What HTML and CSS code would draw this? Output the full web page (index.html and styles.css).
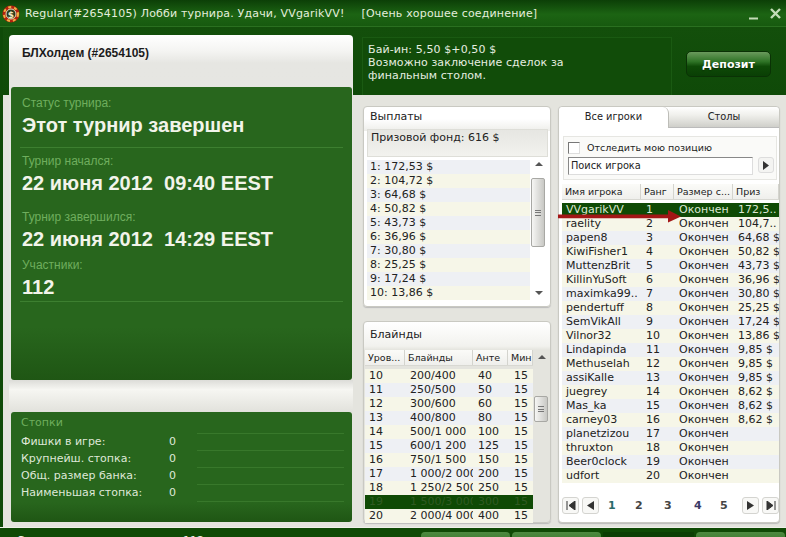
FILE: index.html
```html
<!DOCTYPE html>
<html lang="ru">
<head>
<meta charset="utf-8">
<title>Лобби турнира</title>
<link rel="stylesheet" href="styles.css">
</head>
<body>
<div class="window">
  <header class="titlebar">
    <svg class="logo" width="18" height="18" viewBox="0 0 18 18"><circle cx="9" cy="9" r="8.5" fill="#b3200f"/><circle cx="9" cy="9" r="7" fill="none" stroke="#f0b040" stroke-width="2" stroke-dasharray="3 3"/><circle cx="9" cy="9" r="5" fill="#2a3a20" stroke="#e8e0c0"/><text x="9" y="12.5" text-anchor="middle" class="logo-text">$</text></svg>
    <span class="title-text">Regular(#2654105) Лобби турнира. Удачи, VVgarikVV!</span>
    <span class="title-conn">[Очень хорошее соединение]</span>
    <svg class="winctl" width="36" height="14" viewBox="0 0 36 14"><path d="M0 11.5H9" stroke="#c4dcb8" stroke-width="2"/><path d="M22 2L31 11M31 2L22 11" stroke="#c4dcb8" stroke-width="2.4"/></svg>
  </header>

  <div class="main">
    <section class="left">
      <h1 class="left-title">БЛХолдем (#2654105)</h1>
      <div class="green status">
        <div class="stat-label">Статус турнира:</div>
        <div class="stat-value stat-value--rule">Этот турнир завершен</div>
        <div class="stat-label stat-label--after-rule">Турнир начался:</div>
        <div class="stat-value">22 июня 2012&nbsp; 09:40 EEST</div>
        <div class="stat-label stat-label--wide">Турнир завершился:</div>
        <div class="stat-value">22 июня 2012&nbsp; 14:29 EEST</div>
        <div class="stat-label stat-label--narrow">Участники:</div>
        <div class="stat-value stat-value--last">112</div>
      </div>
      <div class="left-gap"></div>
      <div class="green stacks">
        <div class="stacks-title">Стопки</div>
        <div class="stack-row"><span class="stack-name">Фишки в игре:</span><span class="stack-val">0</span><span class="stack-rule"></span></div>
        <div class="stack-row"><span class="stack-name">Крупнейш. стопка:</span><span class="stack-val">0</span><span class="stack-rule"></span></div>
        <div class="stack-row"><span class="stack-name">Общ. размер банка:</span><span class="stack-val">0</span><span class="stack-rule"></span></div>
        <div class="stack-row"><span class="stack-name">Наименьшая стопка:</span><span class="stack-val">0</span><span class="stack-rule"></span></div>
      </div>
    </section>

    <section class="right">
      <div class="infobar">
        <div class="infobox">Бай-ин: 5,50 $+0,50 $<br>Возможно заключение сделок за<br>финальным столом.</div>
        <button class="deposit">Депозит</button>
      </div>
      <div class="content">
        <div class="col-mid">
          <div class="card card--payouts">
            <div class="card-title">Выплаты</div>
            <div class="prize">Призовой фонд: 616 $</div>
            <div class="list-wrap">
              <div class="list payouts">
                <div class="row">1: 172,53 $</div>
                <div class="row">2: 104,72 $</div>
                <div class="row">3: 64,68 $</div>
                <div class="row">4: 50,82 $</div>
                <div class="row">5: 43,73 $</div>
                <div class="row">6: 36,96 $</div>
                <div class="row">7: 30,80 $</div>
                <div class="row">8: 25,25 $</div>
                <div class="row">9: 17,24 $</div>
                <div class="row">10: 13,86 $</div>
              </div>
              <div class="scrollbar">
                <span class="sb-up"></span>
                <span class="sb-thumb sb-thumb--long"><i></i></span>
                <span class="sb-down"></span>
              </div>
            </div>
          </div>
          <div class="card card--blinds">
            <div class="card-title card-title--blinds">Блайнды</div>
            <div class="blinds-wrap">
              <div class="blinds">
                <div class="thead blinds-grid"><span>Уров...</span><span>Блайнды</span><span>Анте</span><span>Мин</span></div>
                <div class="tbody">
                  <div class="row blinds-grid"><span>10</span><span>200/400</span><span>40</span><span>15</span></div>
                  <div class="row blinds-grid"><span>11</span><span>250/500</span><span>50</span><span>15</span></div>
                  <div class="row blinds-grid"><span>12</span><span>300/600</span><span>60</span><span>15</span></div>
                  <div class="row blinds-grid"><span>13</span><span>400/800</span><span>80</span><span>15</span></div>
                  <div class="row blinds-grid"><span>14</span><span>500/1 000</span><span>100</span><span>15</span></div>
                  <div class="row blinds-grid"><span>15</span><span>600/1 200</span><span>125</span><span>15</span></div>
                  <div class="row blinds-grid"><span>16</span><span>750/1 500</span><span>150</span><span>15</span></div>
                  <div class="row blinds-grid"><span>17</span><span>1 000/2 000</span><span>200</span><span>15</span></div>
                  <div class="row blinds-grid"><span>18</span><span>1 250/2 500</span><span>250</span><span>15</span></div>
                  <div class="row blinds-grid row--current"><span>19</span><span>1 500/3 000</span><span>300</span><span>15</span></div>
                  <div class="row blinds-grid"><span>20</span><span>2 000/4 000</span><span>400</span><span>15</span></div>
                </div>
              </div>
              <div class="scrollbar scrollbar--blinds">
                <span class="sb-up"></span>
                <span class="sb-thumb sb-thumb--short"><i></i></span>
              </div>
            </div>
          </div>
        </div>

        <div class="card card--players">
          <div class="tabs">
            <div class="tab tab--active">Все игроки</div>
            <div class="tab">Столы</div>
          </div>
          <div class="tracker">
            <label class="track"><span class="checkbox"></span>Отследить мою позицию</label>
            <div class="search-line">
              <div class="search">Поиск игрока</div>
              <button class="search-btn"><svg width="8" height="9" viewBox="0 0 8 9"><path d="M1 0L7 4.5L1 9Z" fill="#333"/></svg></button>
            </div>
          </div>
          <div class="thead players-grid"><span>Имя игрока</span><span>Ранг</span><span>Размер с...</span><span>Приз</span></div>
          <div class="tbody players">
            <div class="row players-grid row--me"><span>VVgarikVV</span><span>1</span><span>Окончен</span><span>172,5..</span></div>
            <div class="row players-grid"><span>raelity</span><span>2</span><span>Окончен</span><span>104,7..</span></div>
            <div class="row players-grid"><span>papen8</span><span>3</span><span>Окончен</span><span>64,68 $</span></div>
            <div class="row players-grid"><span>KiwiFisher1</span><span>4</span><span>Окончен</span><span>50,82 $</span></div>
            <div class="row players-grid"><span>MuttenzBrit</span><span>5</span><span>Окончен</span><span>43,73 $</span></div>
            <div class="row players-grid"><span>KillinYuSoft</span><span>6</span><span>Окончен</span><span>36,96 $</span></div>
            <div class="row players-grid"><span>maximka99..</span><span>7</span><span>Окончен</span><span>30,80 $</span></div>
            <div class="row players-grid"><span>pendertuff</span><span>8</span><span>Окончен</span><span>25,25 $</span></div>
            <div class="row players-grid"><span>SemVikAll</span><span>9</span><span>Окончен</span><span>17,24 $</span></div>
            <div class="row players-grid"><span>Vilnor32</span><span>10</span><span>Окончен</span><span>13,86 $</span></div>
            <div class="row players-grid"><span>Lindapinda</span><span>11</span><span>Окончен</span><span>9,85 $</span></div>
            <div class="row players-grid"><span>Methuselah</span><span>12</span><span>Окончен</span><span>9,85 $</span></div>
            <div class="row players-grid"><span>assiKalle</span><span>13</span><span>Окончен</span><span>9,85 $</span></div>
            <div class="row players-grid"><span>juegrey</span><span>14</span><span>Окончен</span><span>8,62 $</span></div>
            <div class="row players-grid"><span>Mas_ka</span><span>15</span><span>Окончен</span><span>8,62 $</span></div>
            <div class="row players-grid"><span>carney03</span><span>16</span><span>Окончен</span><span>8,62 $</span></div>
            <div class="row players-grid"><span>planetzizou</span><span>17</span><span>Окончен</span><span></span></div>
            <div class="row players-grid"><span>thruxton</span><span>18</span><span>Окончен</span><span></span></div>
            <div class="row players-grid"><span>Beer0clock</span><span>19</span><span>Окончен</span><span></span></div>
            <div class="row players-grid"><span>udfort</span><span>20</span><span>Окончен</span><span></span></div>
          </div>
          <div class="pager">
            <button class="pg-btn"><svg width="10" height="9" viewBox="0 0 10 9"><path d="M1 0V9M9 0L3 4.5L9 9Z" stroke="#333" fill="#333"/></svg></button>
            <button class="pg-btn"><svg width="9" height="9" viewBox="0 0 9 9"><path d="M8 0L1 4.5L8 9Z" fill="#333"/></svg></button>
            <div class="pg-nums"><span class="pg-1">1</span><span class="pg-2">2</span><span class="pg-2">3</span><span class="pg-4">4</span><span class="pg-2">5</span></div>
            <button class="pg-btn"><svg width="9" height="9" viewBox="0 0 9 9"><path d="M1 0L8 4.5L1 9Z" fill="#333"/></svg></button>
            <button class="pg-btn"><svg width="10" height="9" viewBox="0 0 10 9"><path d="M9 0V9M1 0L7 4.5L1 9Z" stroke="#333" fill="#333"/></svg></button>
          </div>
          <svg class="red-arrow" width="124" height="13" viewBox="0 0 124 13"><path d="M0 4.6H110V0L123 6.5L110 12.5V8.2H0Z" fill="#a31616"/></svg>
        </div>
      </div>
    </section>
  </div>

  <footer class="footer">
    <span class="foot-text">Зарегистрировано игроков: 112</span>
    <div class="foot-btns">
      <span class="foot-btn">Регистрация</span>
      <span class="foot-btn">Выплаты</span>
      <span class="foot-dark">Автовход</span>
      <span class="foot-btn">Открыть</span>
    </div>
  </footer>
</div>
</body>
</html>
```
FILE: styles.css
```css
* { box-sizing: border-box; }
html, body { margin: 0; padding: 0; }
body {
  width: 786px;
  height: 537px;
  overflow: hidden;
  background: #0f4a08;
  font-family: "DejaVu Sans", Verdana, sans-serif;
  font-size: 11px;
  color: #222;
}
.window { width: 786px; height: 537px; display: flex; flex-direction: column; overflow: hidden; }

/* title bar */
.titlebar {
  height: 27px;
  flex: none;
  display: flex;
  align-items: center;
  padding: 0 1px 0 2px;
  background: linear-gradient(#0c3f07, #1c6413 55%, #175a0f);
  border-bottom: 1px solid #2a7020;
  color: #e4eedc;
  font-size: 11px;
  letter-spacing: .18px;
}
.logo { flex: none; margin-top: 2px; }
.logo-text { font: bold 9px "DejaVu Sans", sans-serif; fill: #f0e8c0; }
.title-text { margin-left: 5px; white-space: nowrap; }
.title-conn { margin-left: 17px; white-space: nowrap; }
.winctl { margin-left: auto; flex: none; margin-top: 1px; }

/* main */
.main {
  flex: none;
  height: 500px;
  display: flex;
  border-left: 3px solid #0f4a08;
  background: linear-gradient(#134f0b 0, #0f4a08 68px, #e4e4de 68px);
}
.left {
  flex: none;
  width: 344px;
  margin: 8px 0 0 6px;
  padding: 0 1px 0 2px;
  border-radius: 4px 4px 0 0;
  background: linear-gradient(#fff, #f4f4f2 16px, #e6e6e2 28px, #e4e4de);
}
.left-title {
  height: 52px;
  margin: 0;
  padding: 11px 0 0 11px;
  font: bold 12px/14px "Liberation Sans", Arial, sans-serif;
  color: #1c1c1c;
}
.green {
  border-radius: 3px;
  background: linear-gradient(#28661d, #28661d 82%, #1f5614);
}
.status { height: 293px; padding: 9px 9px 0 11px; }
.stat-label {
  font: 12px/14px "Liberation Sans", Arial, sans-serif;
  color: #6fae5e;
}
.stat-label--after-rule { margin-top: 6px; }
.stat-label--wide { margin-top: 15px; }
.stat-label--narrow { margin-top: 7px; }
.stat-value {
  margin-top: 3px;
  font: bold 20px/24px "Liberation Sans", Arial, sans-serif;
  color: #f2f4ea;
  white-space: pre;
}
.stat-value--rule { margin: 3px 0 0 -2px; padding: 0 0 10px 2px; border-bottom: 1px solid #3d7f30; }
.stat-value--last { margin: 3px 0 0 -2px; padding: 0 0 2px 2px; border-bottom: 1px solid #3d7f30; }
.left-gap {
  height: 32px;
  background: linear-gradient(#dcdcd8, #f6f6f2 30%, #e2e2dc);
  margin: 0 -1px 0 -2px;
}
.stacks { height: 110px; padding: 4px 8px 0 10px; color: #dfe8d8; }
.stacks-title { height: 17px; font-size: 11px; line-height: 14px; color: #6fae5e; }
.stack-row {
  height: 17px;
  display: flex;
  align-items: center;
  line-height: 17px;
}
.stack-name { width: 148px; flex: none; white-space: nowrap; }
.stack-val { width: 28px; flex: none; }
.stack-rule { flex: 1; align-self: stretch; border-bottom: 1px solid #38782b; border-top: 1px solid #38782b; margin-bottom: -1px; }

/* right */
.right { flex: 1; min-width: 0; display: flex; flex-direction: column; }
.infobar { height: 68px; flex: none; padding: 10px 0 0 9px; display: flex; align-items: flex-start; }
.infobox {
  width: 310px;
  height: 58px;
  padding: 5px 0 0 5px;
  border: 1px solid #1a5a12;
  border-bottom: 0;
  line-height: 13px;
  letter-spacing: .1px;
  color: #e6eee0;
  background: #114c09;
}
.deposit {
  width: 85px;
  height: 26px;
  margin: 14px 0 0 14px;
  padding: 0;
  border: 1px solid #0a3205;
  border-radius: 5px;
  background: linear-gradient(#6a9a5c, #2f7426 40%, #0e4a07 60%, #0a3f05);
  color: #fff;
  font: bold 11px "DejaVu Sans", sans-serif;
  text-shadow: 0 1px 1px #0a3005;
}
.content {
  flex: 1;
  display: flex;
  gap: 7px;
  padding: 11px 0 4px 10px;
  min-height: 0;
}
.col-mid { width: 188px; flex: none; display: flex; flex-direction: column; gap: 14px; }
.card {
  background: #fff;
  border: 1px solid #c9c9c2;
  border-radius: 4px;
  box-shadow: 0 1px 1px #bbb;
}
.card--payouts { height: 201px; padding: 0 2px 0 3px; background: linear-gradient(#fff, #fff 12px, #eeeeea 24px, #fff 24px); }
.card--blinds { height: 202px; background: linear-gradient(#fff, #f2f2ee 24px, #e4e4de 28px); }
.card-title { height: 22px; padding: 3px 0 0 3px; line-height: 14px; }
.card-title--blinds { height: 28px; padding: 6px 0 0 6px; }
.prize {
  height: 28px;
  padding: 1px 0 0 3px;
  line-height: 14px;
  border: 1px solid #deded8;
  background: linear-gradient(#e6e6e2, #f2f2ee);
}
.list-wrap { display: flex; margin-top: 3px; }
.list { width: 163px; flex: none; }
.row { height: 14px; line-height: 14px; white-space: nowrap; color: #222; }
.payouts .row { padding-left: 3px; }
.payouts .row:nth-child(odd) { background: #eef0f4; }
.payouts .row:nth-child(even) { background: #f6f6e8; }

/* scrollbars */
.scrollbar { width: 17px; height: 140px; position: relative; margin-left: 0; }
.sb-up, .sb-down { position: absolute; left: 5px; width: 0; height: 0; border: 4px solid transparent; }
.sb-up { top: 2px; border-bottom: 4px solid #555; border-top: 0; }
.sb-down { bottom: 5px; border-top: 4px solid #555; border-bottom: 0; }
.sb-thumb {
  position: absolute;
  left: 1px;
  width: 14px;
  border: 1px solid #a8a8a4;
  border-radius: 2px;
  background: linear-gradient(90deg, #f6f6f4, #c8c8c4);
  display: flex;
  align-items: center;
  justify-content: center;
}
.sb-thumb i { display: block; width: 6px; height: 6px; border-top: 1px solid #777; border-bottom: 1px solid #777; background: linear-gradient(#777, #777) center / 100% 1px no-repeat; }
.sb-thumb--long { top: 18px; height: 69px; }
.sb-thumb--short { top: 46px; height: 26px; }

/* blinds */
.blinds-wrap { display: flex; }
.blinds { width: 168px; flex: none; margin-left: 1px; }
.thead {
  height: 16px;
  background: linear-gradient(#fbfbf8, #efefec);
  font-size: 9.5px;
  line-height: 15px;
  border-bottom: 1px solid #d8d8d2;
}
.thead span { padding-left: 3px; border-right: 1px solid #d4d4ce; overflow: hidden; white-space: nowrap; }
.blinds-grid { display: grid; grid-template-columns: 40px 68px 35px 25px; }
.blinds .tbody { margin-top: 3px; }
.blinds .row span { overflow: hidden; white-space: nowrap; }
.blinds .row span:nth-child(1) { padding-left: 4px; }
.blinds .row span:nth-child(2) { padding-left: 5px; }
.blinds .row span:nth-child(3) { padding-left: 5px; }
.blinds .row span:nth-child(4) { padding-left: 6px; }
.blinds .row:nth-child(odd) { background: #f6f6e8; }
.blinds .row:nth-child(even) { background: #eef0f4; }
.blinds .row--current:nth-child(even) { background: #0f4a05; color: #2f5a22; }
.scrollbar--blinds { height: 170px; }
.scrollbar--blinds .sb-up { top: 5px; }

/* players */
.card--players { width: 222px; flex: none; height: 417px; position: relative; padding: 0 1px; }
.tabs { display: flex; height: 21px; margin: 0 -1px; }
.tab {
  flex: 1;
  text-align: center;
  line-height: 20px;
  font-size: 9.8px;
  background: linear-gradient(#fff, #f0f0ec 40%, #cfcfca);
  border-bottom: 1px solid #bbb;
  border-radius: 0 4px 0 0;
}
.tab--active {
  flex: none;
  width: 110px;
  background: #fff;
  border-bottom: 0;
  border-right: 1px solid #bdbdb8;
  border-radius: 4px 6px 0 0;
}
.tracker {
  height: 44px;
  margin: 8px 1px 0 3px;
  padding: 5px 0 0 4px;
  border: 1px solid #e6e6e2;
  background: #fafaf8;
}
.track { display: flex; align-items: center; height: 12px; line-height: 12px; font-size: 9.5px; }
.checkbox { width: 12px; height: 12px; margin-right: 7px; border: 1px solid #777; border-right-color: #ddd; border-bottom-color: #ddd; background: #fff; }
.search-line { display: flex; margin-top: 3px; }
.search {
  width: 185px;
  height: 18px;
  padding-left: 2px;
  line-height: 16px;
  font-size: 9.8px;
  border: 1px solid #888;
  border-right-color: #ddd;
  border-bottom-color: #ddd;
  background: #fff;
}
.search-btn {
  width: 16px;
  height: 16px;
  margin-left: 5px;
  padding: 0;
  border: 1px solid #ddd;
  border-radius: 3px;
  background: #f4f4f2;
  display: flex;
  align-items: center;
  justify-content: center;
}
.players-grid { display: grid; grid-template-columns: 79px 33px 59px 46px; }
.card--players .thead { margin: 4px 0 0 2px; width: 217px; }
.players { margin: 3px 0 0 2px; width: 217px; }
.players .row span { overflow: hidden; white-space: nowrap; }
.players .row span:nth-child(1) { padding-left: 4px; }
.players .row span:nth-child(2) { padding-left: 5px; }
.players .row span:nth-child(3) { padding-left: 5px; }
.players .row span:nth-child(4) { padding-left: 5px; }
.players .row:nth-child(odd) { background: #eef0f4; }
.players .row:nth-child(even) { background: #f6f6e8; }
.players .row--me:nth-child(odd) { background: #0f4a05; color: #dce8d4; }
.red-arrow { position: absolute; left: -1px; top: 103px; }
.pager { display: flex; align-items: center; margin: 14px 0 0 2px; width: 217px; height: 17px; }
.pg-btn {
  width: 17px;
  height: 17px;
  padding: 0;
  margin-right: 3px;
  border: 1px solid #d4d4d0;
  border-radius: 3px;
  background: #f8f8f6;
  display: flex;
  align-items: center;
  justify-content: center;
}
.pg-btn:last-child { margin-right: 0; }
.pg-nums {
  flex: 1;
  display: grid;
  grid-template-columns: 27px 29px 30px 26px 18px;
  padding-left: 6px;
  font-weight: bold;
  font-size: 11px;
}
.pg-1 { color: #2a6a6a; }
.pg-2 { color: #444; }
.pg-4 { color: #3a3a66; }

/* footer */
.footer {
  flex: none;
  height: 10px;
  display: flex;
  background: #0f4a05;
  border-top: 1px solid #f0f0ea;
  color: #e8efe0;
  overflow: hidden;
}
.foot-text { margin-left: 18px; padding-top: 6px; line-height: 14px; white-space: nowrap; }
.foot-btns { margin-left: auto; display: flex; gap: 2px; padding: 4px 1px 0 0; }
.foot-btn, .foot-dark { width: 89px; height: 20px; padding-top: 3px; line-height: 13px; text-align: center; }
.foot-btn { background: linear-gradient(#4d8a40, #2a6a1e); border-radius: 4px 4px 0 0; }
.foot-dark { background: #0c3f04; width: 91px; }
```
